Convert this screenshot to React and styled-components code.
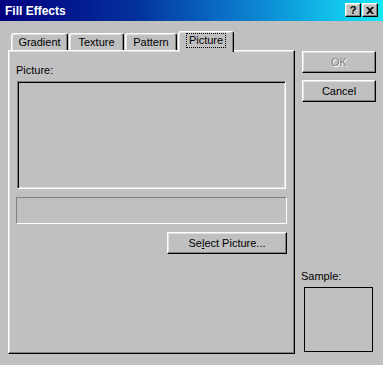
import React from 'react';
import styled, { createGlobalStyle } from 'styled-components';

const GlobalStyle = createGlobalStyle`
  html, body {
    margin: 0;
    padding: 0;
    background: #c0c0c0;
  }
  * {
    box-sizing: border-box;
  }
`;

const raised = `
  border-top: 1px solid #ffffff;
  border-left: 1px solid #ffffff;
  border-right: 1px solid #000000;
  border-bottom: 1px solid #000000;
  box-shadow: inset -1px -1px #808080, inset 1px 1px #dfdfdf;
`;

const Window = styled.div`
  width: 383px;
  height: 365px;
  background: #c0c0c0;
  font-family: "Liberation Sans", Arial, sans-serif;
  font-size: 11px;
  color: #000;
  display: flex;
  flex-direction: column;
`;

const TitleBar = styled.div`
  height: 21px;
  display: flex;
  align-items: center;
  justify-content: space-between;
  padding: 0 5px 0 5px;
  background: linear-gradient(90deg, #000080 0%, #04309c 35%, #0c88d4 68%, #14e8f8 100%);
`;

const TitleText = styled.span`
  color: #fff;
  font-weight: bold;
  font-size: 12px;
`;

const TitleButtons = styled.div`
  display: flex;
  gap: 1px;
  margin-top: -1px;
`;

const TitleButton = styled.div`
  width: 16px;
  height: 14px;
  background: #c0c0c0;
  ${raised}
  display: flex;
  align-items: center;
  justify-content: center;
  font-weight: bold;
  font-size: 11px;
  line-height: 1;
`;

const Body = styled.div`
  display: flex;
  align-items: stretch;
  padding: 10px 0 0 8px;
  gap: 7px;
`;

const LeftCol = styled.div`
  width: 287px;
  display: flex;
  flex-direction: column;
`;

const TabRow = styled.div`
  height: 19px;
  display: flex;
  align-items: flex-end;
  padding-left: 3px;
`;

const Tab = styled.div`
  position: relative;
  z-index: ${(p) => (p.$active ? 2 : 0)};
  width: ${(p) => p.$w}px;
  height: ${(p) => (p.$active ? 21 : 17)}px;
  margin-bottom: ${(p) => (p.$active ? -2 : 0)}px;
  margin-right: 1px;
  background: #c0c0c0;
  border-top: 1px solid #fff;
  border-left: 1px solid #fff;
  border-right: 1px solid #000;
  border-radius: 3px 3px 0 0;
  box-shadow: inset -1px 0 #808080, inset 1px 1px #dfdfdf;
  display: flex;
  justify-content: center;
  padding-top: 2px;
  line-height: 13px;
`;

const FocusLabel = styled.span`
  border: 1px dotted #000;
  padding: 0 2px;
  height: 15px;
  margin-top: -1px;
`;

const Panel = styled.div`
  position: relative;
  z-index: 1;
  height: 304px;
  background: #c0c0c0;
  ${raised}
  display: flex;
  flex-direction: column;
  padding: 13px 7px 0 7px;
`;

const Label = styled.div`
  line-height: 13px;
  margin-bottom: ${(p) => p.$mb || 0}px;
  margin-left: ${(p) => p.$ml || 0}px;
`;

const PictureBox = styled.div`
  height: 108px;
  margin: 0 1px;
  border-top: 1px solid #808080;
  border-left: 1px solid #808080;
  border-right: 1px solid #fff;
  border-bottom: 1px solid #fff;
  box-shadow: inset 1px 1px #000, inset -1px -1px #dfdfdf;
`;

const Field = styled.div`
  height: 27px;
  margin-top: 8px;
  border-top: 1px solid #808080;
  border-left: 1px solid #808080;
  border-right: 1px solid #fff;
  border-bottom: 1px solid #fff;
`;

const ButtonRow = styled.div`
  display: flex;
  justify-content: flex-end;
  margin-top: 8px;
`;

const Button = styled.div`
  width: ${(p) => p.$w}px;
  height: 22px;
  background: #c0c0c0;
  ${raised}
  display: flex;
  align-items: center;
  justify-content: center;
  margin-top: ${(p) => p.$mt || 0}px;
  color: ${(p) => (p.$disabled ? '#808080' : '#000')};
  text-shadow: ${(p) => (p.$disabled ? '1px 1px #fff' : 'none')};
  u {
    text-decoration: underline;
  }
`;

const RightCol = styled.div`
  width: 74px;
  display: flex;
  flex-direction: column;
  padding-top: 20px;
  padding-bottom: 2px;
`;

const SampleGroup = styled.div`
  margin-top: auto;
  display: flex;
  flex-direction: column;
`;

const SampleBox = styled.div`
  width: 69px;
  height: 65px;
  margin-left: 2px;
  border: 1px solid #000;
`;

const CloseIcon = () => (
  <svg width="8" height="7" viewBox="0 0 8 7">
    <path d="M0 0h2l2 2 2-2h2L5 3.5 8 7H6L4 5 2 7H0l3-3.5z" fill="#000" />
  </svg>
);

const tabs = [
  { name: 'Gradient', w: 57 },
  { name: 'Texture', w: 55 },
  { name: 'Pattern', w: 52 },
  { name: 'Picture', w: 56, active: true },
];

export default function App() {
  return (
    <Window>
      <GlobalStyle />
      <TitleBar>
        <TitleText>Fill Effects</TitleText>
        <TitleButtons>
          <TitleButton>?</TitleButton>
          <TitleButton>
            <CloseIcon />
          </TitleButton>
        </TitleButtons>
      </TitleBar>
      <Body>
        <LeftCol>
          <TabRow>
            {tabs.map((t) => (
              <Tab key={t.name} $w={t.w} $active={t.active}>
                {t.active ? <FocusLabel>{t.name}</FocusLabel> : t.name}
              </Tab>
            ))}
          </TabRow>
          <Panel>
            <Label $mb={4}>Picture:</Label>
            <PictureBox />
            <Field />
            <ButtonRow>
              <Button $w={120}>
                <span>
                  Se<u>l</u>ect Picture...
                </span>
              </Button>
            </ButtonRow>
          </Panel>
        </LeftCol>
        <RightCol>
          <Button $w={74} $disabled>OK</Button>
          <Button $w={74} $mt={7}>Cancel</Button>
          <SampleGroup>
            <Label $mb={4} $ml={-1}>Sample:</Label>
            <SampleBox />
          </SampleGroup>
        </RightCol>
      </Body>
    </Window>
  );
}
